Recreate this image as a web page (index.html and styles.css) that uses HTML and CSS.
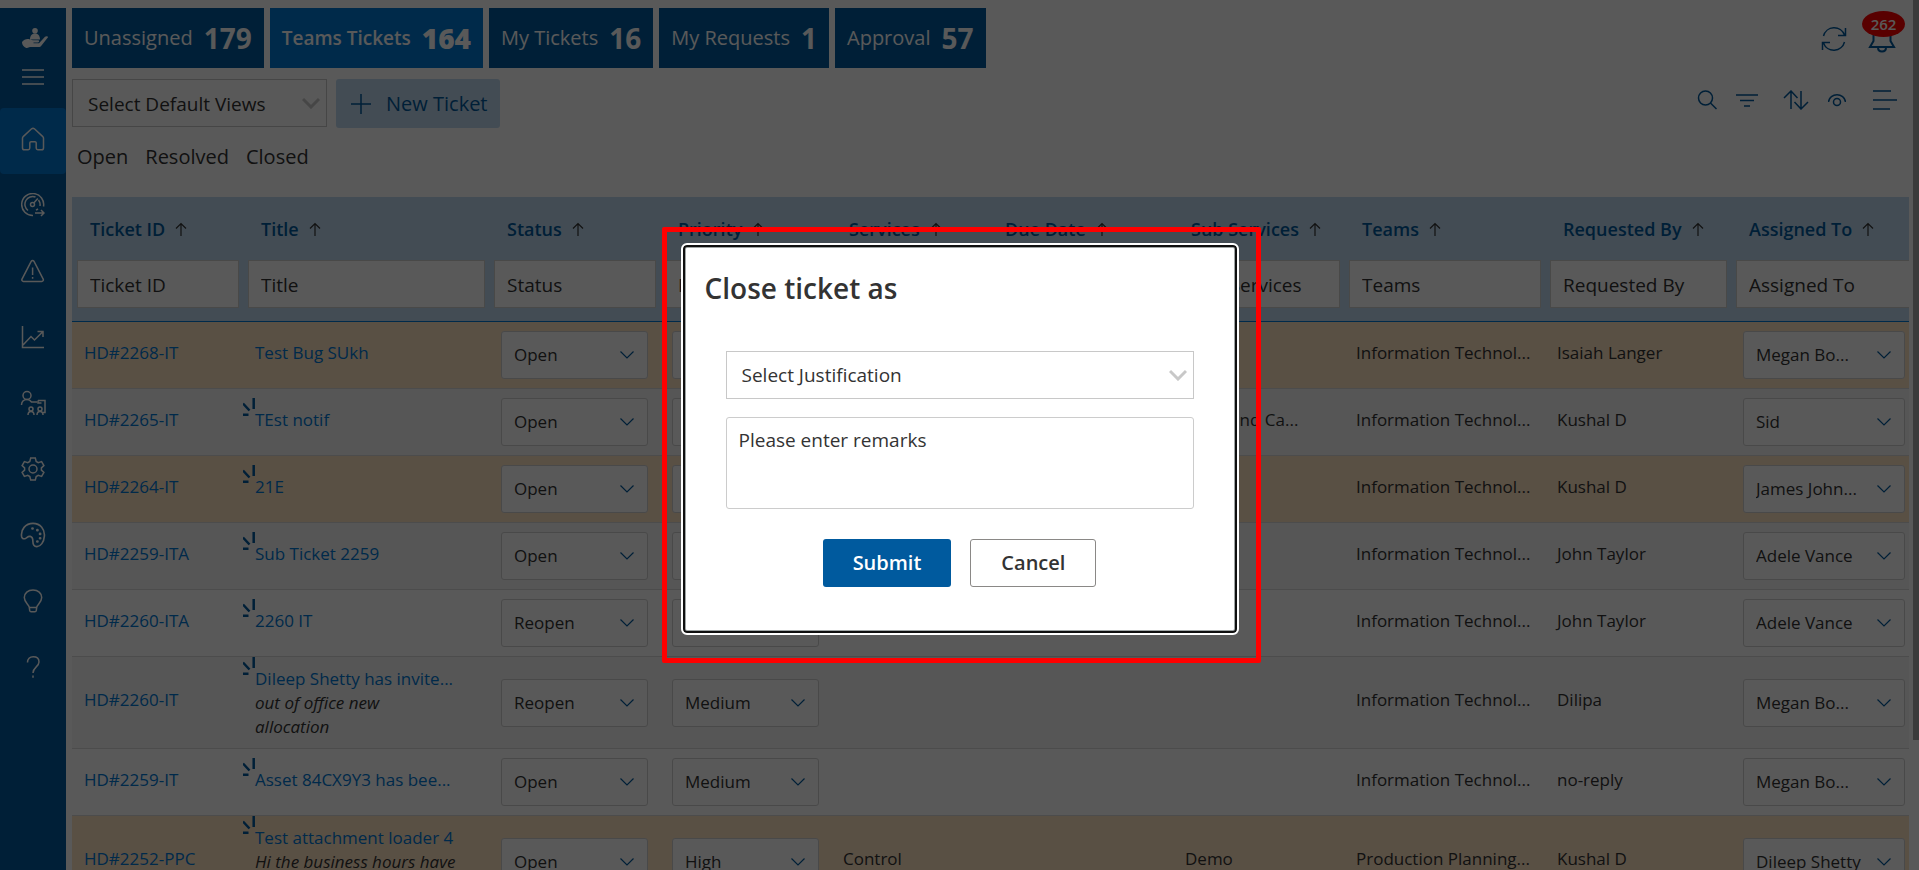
FILE: index.html
```html
<!DOCTYPE html>
<html lang="en">
<head>
<meta charset="utf-8">
<title>Teams Tickets</title>
<link rel="stylesheet" href="styles.css">
</head>
<body>
<svg class="sprite" aria-hidden="true">
  <symbol id="i-up" viewBox="0 0 12 15"><path d="M6 14V1.500M1 6.500 6 1.500l5 5"/></symbol>
  <symbol id="i-burst" viewBox="0 0 12 18"><path d="M10.700 0v11M0 5.500l6.500 7M0 16.800h5.500"/></symbol>
</svg>

<div class="app">
  <nav class="sidebar" aria-label="Main">
    <div class="sidebar-top">
      <svg class="logo" viewBox="0 0 26 20" aria-hidden="true"><circle cx="13" cy="2.800" r="2.800"/><path d="M8 11.500c0-4 2.200-6 5-6s5 2 5 6zM0 14c2-2.500 5-3.500 8-2.500l3 .7h5c1.500 0 1.500 2 0 2.200h-4.500v.8h5.500l6-6.500c1-1 3.500-.6 3 .6l-6.500 8.200c-.8 1-1.500 1.500-3 1.500H8L5 20c-2 0-5-2.500-5-6z"/></svg>
      <button class="icon-btn" type="button" aria-label="Toggle menu"><svg width="22" height="16" viewBox="0 0 22 16"><path d="M0 1h22M0 8h22M0 15h22"/></svg></button>
    </div>
    <a class="nav-item is-active" href="#" aria-label="Home"><svg width="24" height="24" viewBox="0 0 24 24"><path d="M12 1.300c.5 0 1 .2 1.400.5l8.400 7.800c.5.4.7 1 .7 1.600v9.700c0 1-.8 1.800-1.800 1.800h-3.900c-.9 0-1.600-.7-1.600-1.600V16c0-.8-.6-1.300-1.300-1.300h-3.800c-.7 0-1.300.5-1.300 1.300v5.100c0 .9-.7 1.600-1.600 1.600H3.300c-1 0-1.800-.8-1.800-1.800v-9.700c0-.6.2-1.200.7-1.600l8.400-7.800c.4-.3.900-.5 1.400-.5z"/></svg></a>
    <a class="nav-item" href="#" aria-label="Dashboard"><svg width="24" height="24" viewBox="0 0 24 24"><path d="M12 22.500A11 11 0 1 1 22.500 13.500M7 17.500A7.800 7.800 0 0 1 14.500 4M17.500 7A7.800 7.800 0 0 1 19 13M12.800 10l4-4.500M14 20h9M20 17l3 3-3 3M15 17.200l2-1.200"/><circle cx="11.500" cy="11.500" r="2"/></svg></a>
    <a class="nav-item" href="#" aria-label="Alerts"><svg width="24" height="24" viewBox="0 0 24 24"><path d="M10.300 2.200a1.600 1.600 0 0 1 2.600 0l9.300 18c.5 1-.2 2.200-1.400 2.200H2.400c-1.200 0-1.900-1.200-1.400-2.200zM11.600 8.500v7.500M11.600 18v1.800"/></svg></a>
    <a class="nav-item" href="#" aria-label="Reports"><svg width="24" height="24" viewBox="0 0 24 24"><path d="M1.500 1v21.500H23M2 20l8-8.500 3.500 3.500L22 6.500M16.500 6.500H22V12"/></svg></a>
    <a class="nav-item" href="#" aria-label="Teams"><svg width="26" height="26" viewBox="0 0 26 26"><circle cx="7" cy="5.500" r="4"/><path d="M1.500 15c0-3.200 2-5.500 5.500-5.500 2 0 3.500 1 4.500 2.500H17M18 10.500h7v12h-2.500M18 10.500v2.500h3.500M8 25c0-2 1-3.500 3-3.500s3 1.500 3 3.500M17 25c0-2 1-3.500 3-3.500s3 1.500 3 3.500"/><circle cx="11" cy="19" r="2"/><circle cx="20" cy="19" r="2"/></svg></a>
    <a class="nav-item" href="#" aria-label="Settings"><svg width="24" height="24" viewBox="0 0 24 24"><path d="M9.700 1h4.600l.9 3.400 2 1.200 3.400-1 2.300 4-2.500 2.300v2.200l2.500 2.300-2.300 4-3.400-1-2 1.200-.9 3.400H9.700l-.9-3.400-2-1.200-3.400 1-2.300-4 2.500-2.300v-2.200L1.100 8.600l2.300-4 3.400 1 2-1.200z"/><circle cx="12" cy="12" r="4"/></svg></a>
    <a class="nav-item" href="#" aria-label="Theme"><svg width="26" height="26" viewBox="0 0 24 24"><path d="M1.500 13.500C.5 7 5 1.300 12 1.300S23 7 22.500 13c-.4 5.500-3.500 9.800-7 9.700-2.800-.1-3.600-2.200-3.600-4.700 0-2.700-.6-4.300-2.400-4.700C7 12.800 6.300 15 4.500 15.400c-1.500.3-2.700-.5-3-1.900z"/><path class="dots" d="M11.500 6h.1M16 7.500h.1M18.500 11h.1M18.500 15h.1M16 18h.1"/></svg></a>
    <a class="nav-item" href="#" aria-label="Ideas"><svg width="24" height="24" viewBox="0 0 24 24"><path d="M8.300 18.500c-.3-3-5-5-5-10C3.300 4.200 7 1 12 1s8.700 3.200 8.700 7.500c0 5-4.700 7-5 10zM8.300 18.500l.4 3c.1.700.7 1.300 1.500 1.300h3.600c.8 0 1.400-.6 1.500-1.300l.4-3"/></svg></a>
    <a class="nav-item" href="#" aria-label="Help"><svg width="24" height="24" viewBox="0 0 24 24"><path d="M6.500 7.500C6.500 4 8.800 1.800 12.200 1.800s5.800 2 5.800 5.200c0 4.700-6 5.200-6 11M12 20.500v2.300"/></svg></a>
  </nav>

  <main class="main">
    <header class="topbar">
      <div class="tabs">
        <button class="tab" type="button">Unassigned <b>179</b></button>
        <button class="tab is-active" type="button">Teams Tickets <b>164</b></button>
        <button class="tab" type="button">My Tickets <b>16</b></button>
        <button class="tab" type="button">My Requests <b>1</b></button>
        <button class="tab" type="button">Approval <b>57</b></button>
      </div>
      <div class="top-actions">
        <button class="icon-btn" type="button" aria-label="Refresh"><svg width="26" height="26" viewBox="0 0 26 26"><path d="M2.500 10A11 11 0 0 1 23.500 9M24.500 2v7.500H17M23.500 16A11 11 0 0 1 2.500 17M1.500 24v-7.500H9"/></svg></button>
        <button class="icon-btn bell" type="button" aria-label="Notifications"><svg width="28" height="28" viewBox="0 0 28 28"><path d="M14 2c-5 0-8.500 3.500-8.500 8.500V16L2 22h24l-3.500-6v-5.500C22.500 5.500 19 2 14 2zM10 22.500c0 2.500 1.800 4 4 4s4-1.500 4-4"/></svg><span class="badge">262</span></button>
      </div>
    </header>

    <div class="toolbar">
      <select class="view-select" aria-label="Default view"><option>Select Default Views</option></select>
      <button class="new-ticket" type="button"><svg width="20" height="20" viewBox="0 0 20 20" aria-hidden="true"><path d="M10 0v20M0 10h20"/></svg>New Ticket</button>
      <div class="tools">
        <button class="icon-btn" type="button" aria-label="Search"><svg width="20" height="20" viewBox="0 0 20 20"><circle cx="8.500" cy="8" r="7"/><path d="M13.500 13l6 6"/></svg></button>
        <button class="icon-btn" type="button" aria-label="Filter"><svg width="22" height="14" viewBox="0 0 22 14"><path d="M0 2h22M4 7.500h14M8 13h6"/></svg></button>
        <button class="icon-btn sort" type="button" aria-label="Sort"><svg width="26" height="20" viewBox="0 0 26 20"><path d="M8 19V1.500M1 8l7-7 6.500 7M18 1v17.500M11.500 12l6.500 7 7-7"/></svg></button>
        <button class="icon-btn" type="button" aria-label="Show columns"><svg width="18" height="14" viewBox="0 0 18 14"><path d="M.5 9C1 4.500 5 1.800 9 1.800S17 4.500 17.500 9"/><circle cx="9" cy="9" r="3.500"/></svg></button>
        <button class="icon-btn list" type="button" aria-label="List options"><svg width="24" height="20" viewBox="0 0 24 20"><path d="M0 1h18M0 10h24M0 19h17"/></svg></button>
      </div>
    </div>

    <div class="quick-filters"><a href="#">Open</a><a href="#">Resolved</a><a href="#">Closed</a></div>

    <div class="table-wrap">
      <table class="tickets">
        <colgroup><col class="w-171"><col class="w-246"><col class="w-171"><col class="w-171"><col class="w-156"><col class="w-186"><col class="w-171"><col class="w-201"><col class="w-186"><col class="w-186"></colgroup>
        <thead>
          <tr>
            <th><span>Ticket ID <svg><use href="#i-up"/></svg></span><input aria-label="Filter Ticket ID" placeholder="Ticket ID"></th>
            <th><span>Title <svg><use href="#i-up"/></svg></span><input aria-label="Filter Title" placeholder="Title"></th>
            <th><span>Status <svg><use href="#i-up"/></svg></span><input aria-label="Filter Status" placeholder="Status"></th>
            <th><span>Priority <svg><use href="#i-up"/></svg></span><input aria-label="Filter Priority" placeholder="Priority"></th>
            <th><span>Services <svg><use href="#i-up"/></svg></span><input aria-label="Filter Services" placeholder="Services"></th>
            <th><span>Due Date <svg><use href="#i-up"/></svg></span><input aria-label="Filter Due Date" placeholder="Due Date"></th>
            <th><span>Sub Services <svg><use href="#i-up"/></svg></span><input aria-label="Filter Sub Services" placeholder="Sub Services"></th>
            <th><span>Teams <svg><use href="#i-up"/></svg></span><input aria-label="Filter Teams" placeholder="Teams"></th>
            <th><span>Requested By <svg><use href="#i-up"/></svg></span><input aria-label="Filter Requested By" placeholder="Requested By"></th>
            <th><span>Assigned To <svg><use href="#i-up"/></svg></span><input aria-label="Filter Assigned To" placeholder="Assigned To"></th>
          </tr>
        </thead>
        <tbody>
          <tr class="late">
            <td><a href="#">HD#2268-IT</a></td>
            <td><a href="#">Test Bug SUkh</a></td>
            <td class="pick"><select aria-label="Status"><option>Open</option></select></td>
            <td class="pick"><select aria-label="Priority"><option>Medium</option></select></td>
            <td></td><td></td><td></td>
            <td>Information Technol...</td><td>Isaiah Langer</td>
            <td class="pick"><select aria-label="Assigned to"><option>Megan Bo...</option></select></td>
          </tr>
          <tr>
            <td><a href="#">HD#2265-IT</a></td>
            <td><a class="fresh" href="#"><svg><use href="#i-burst"/></svg>TEst notif</a></td>
            <td class="pick"><select aria-label="Status"><option>Open</option></select></td>
            <td class="pick"><select aria-label="Priority"><option>Medium</option></select></td>
            <td></td><td></td><td>Sales and Ca...</td>
            <td>Information Technol...</td><td>Kushal D</td>
            <td class="pick"><select aria-label="Assigned to"><option>Sid</option></select></td>
          </tr>
          <tr class="late">
            <td><a href="#">HD#2264-IT</a></td>
            <td><a class="fresh" href="#"><svg><use href="#i-burst"/></svg>21E</a></td>
            <td class="pick"><select aria-label="Status"><option>Open</option></select></td>
            <td class="pick"><select aria-label="Priority"><option>Medium</option></select></td>
            <td></td><td></td><td></td>
            <td>Information Technol...</td><td>Kushal D</td>
            <td class="pick"><select aria-label="Assigned to"><option>James John...</option></select></td>
          </tr>
          <tr>
            <td><a href="#">HD#2259-ITA</a></td>
            <td><a class="fresh" href="#"><svg><use href="#i-burst"/></svg>Sub Ticket 2259</a></td>
            <td class="pick"><select aria-label="Status"><option>Open</option></select></td>
            <td class="pick"><select aria-label="Priority"><option>Medium</option></select></td>
            <td></td><td></td><td></td>
            <td>Information Technol...</td><td>John Taylor</td>
            <td class="pick"><select aria-label="Assigned to"><option>Adele Vance</option></select></td>
          </tr>
          <tr>
            <td><a href="#">HD#2260-ITA</a></td>
            <td><a class="fresh" href="#"><svg><use href="#i-burst"/></svg>2260 IT</a></td>
            <td class="pick"><select aria-label="Status"><option>Reopen</option></select></td>
            <td class="pick"><select aria-label="Priority"><option>Medium</option></select></td>
            <td></td><td></td><td></td>
            <td>Information Technol...</td><td>John Taylor</td>
            <td class="pick"><select aria-label="Assigned to"><option>Adele Vance</option></select></td>
          </tr>
          <tr>
            <td><a href="#">HD#2260-IT</a></td>
            <td class="long"><a class="fresh" href="#"><svg><use href="#i-burst"/></svg>Dileep Shetty has invite...</a><em>out of office new<br>allocation</em></td>
            <td class="pick"><select aria-label="Status"><option>Reopen</option></select></td>
            <td class="pick"><select aria-label="Priority"><option>Medium</option></select></td>
            <td></td><td></td><td></td>
            <td>Information Technol...</td><td>Dilipa</td>
            <td class="pick"><select aria-label="Assigned to"><option>Megan Bo...</option></select></td>
          </tr>
          <tr>
            <td><a href="#">HD#2259-IT</a></td>
            <td><a class="fresh" href="#"><svg><use href="#i-burst"/></svg>Asset 84CX9Y3 has bee...</a></td>
            <td class="pick"><select aria-label="Status"><option>Open</option></select></td>
            <td class="pick"><select aria-label="Priority"><option>Medium</option></select></td>
            <td></td><td></td><td></td>
            <td>Information Technol...</td><td>no-reply</td>
            <td class="pick"><select aria-label="Assigned to"><option>Megan Bo...</option></select></td>
          </tr>
          <tr class="late">
            <td><a href="#">HD#2252-PPC</a></td>
            <td class="long"><a class="fresh" href="#"><svg><use href="#i-burst"/></svg>Test attachment loader 4</a><em>Hi the business hours have</em></td>
            <td class="pick"><select aria-label="Status"><option>Open</option></select></td>
            <td class="pick"><select aria-label="Priority"><option>High</option></select></td>
            <td>Control</td><td></td><td>Demo</td>
            <td>Production Planning...</td><td>Kushal D</td>
            <td class="pick"><select aria-label="Assigned to"><option>Dileep Shetty</option></select></td>
          </tr>
        </tbody>
      </table>
    </div>
  </main>
  <div class="scrollbar"></div>
</div>

<div class="overlay">
  <div class="dialog-anchor">
    <section class="dialog" role="dialog" aria-labelledby="dialog-title">
      <h2 id="dialog-title">Close ticket as</h2>
      <form class="dialog-form">
        <select class="justification" aria-label="Justification"><option>Select Justification</option></select>
        <textarea aria-label="Remarks" placeholder="Please enter remarks"></textarea>
        <div class="dialog-actions">
          <button class="submit" type="button">Submit</button>
          <button class="cancel" type="button">Cancel</button>
        </div>
      </form>
    </section>
    <div class="highlight"></div>
  </div>
</div>
</body>
</html>
```
FILE: styles.css
```css
* { box-sizing: border-box; }

body {
  margin: 0;
  height: 100vh;
  overflow: hidden;
  background: #fff;
  color: #333;
  font-family: "Segoe UI", "Open Sans", "Noto Sans", sans-serif;
  font-size: 17px;
  line-height: 24px;
}

button, input, select, textarea { font: inherit; color: inherit; }
button { cursor: pointer; }
a { color: #0078d4; text-decoration: none; }
svg { display: block; fill: none; stroke: currentColor; stroke-width: 1.5; }
.sprite { position: absolute; width: 0; height: 0; }

select {
  appearance: none;
  border: 1px solid #d2d2d2;
  background: #fff no-repeat;
  text-overflow: ellipsis;
}

.icon-btn {
  position: relative;
  display: block;
  padding: 0;
  border: 0;
  background: none;
}

.app { display: flex; height: 100vh; overflow: hidden; }

/* Sidebar */
.sidebar {
  flex: none;
  width: 66px;
  margin-top: 8px;
  background: #005a9e;
  color: #fff;
}
.sidebar-top {
  display: flex;
  flex-direction: column;
  align-items: center;
  gap: 21px;
  height: 100px;
  padding-top: 20px;
}
.logo { width: 26px; height: 20px; fill: #fff; stroke: none; margin-left: 4px; }
.nav-item {
  display: grid;
  place-items: center;
  height: 66px;
  padding-bottom: 4px;
  border-radius: 4px;
  color: #fff;
}
.nav-item.is-active { background: #0078d4; }
.dots { stroke-width: 2.5; stroke-linecap: round; }

/* Main column */
.main { flex: 1; min-width: 0; padding: 8px 4px 0 6px; }
.scrollbar { flex: none; width: 6px; height: 85vh; background: #a8a8a8; }

.topbar { display: flex; justify-content: space-between; height: 60px; }
.tabs { display: flex; gap: 6px; }
.tab {
  display: flex;
  align-items: center;
  gap: 11px;
  padding: 0 12px;
  border: 0;
  background: #005a9e;
  color: #fff;
  font-size: 20px;
}
.tab b { font-size: 28px; }
.tab.is-active { background: #0078d4; font-size: 19px; font-weight: 600; }

.top-actions {
  display: flex;
  align-items: center;
  gap: 21px;
  padding: 2px 13px 0 0;
  color: #005a9e;
}
.bell svg { stroke-width: 2; }
.badge {
  position: absolute;
  left: -6px;
  top: -14px;
  width: 43px;
  border-radius: 50%;
  background: #f00;
  color: #fff;
  font-size: 15px;
  font-weight: 600;
  line-height: 26px;
}

.toolbar { display: flex; align-items: flex-start; gap: 9px; margin-top: 11px; color: #005a9e; }
.view-select, .justification {
  height: 48px;
  padding: 0 40px 0 15px;
  border-color: #c8c8c8;
  color: #333;
  background-image: url("data:image/svg+xml,%3Csvg xmlns='http://www.w3.org/2000/svg' width='18' height='12' fill='none' stroke='%23c8c8c8' stroke-width='3'%3E%3Cpath d='M1 2l8 8 8-8'/%3E%3C/svg%3E");
}
.view-select { width: 255px; padding-top: 2px; font-size: 19px; background-position: right 6px center; }
.new-ticket {
  display: flex;
  align-items: center;
  gap: 15px;
  height: 49px;
  padding: 0 12px 0 15px;
  border: 0;
  border-radius: 3px;
  background: #c0daf0;
  font-size: 20px;
}
.tools { display: flex; align-items: center; margin-left: auto; height: 41px; gap: 19px; padding-right: 12px; }
.sort { margin-left: 6px; }
.list { margin-left: 8px; }

.quick-filters { display: flex; gap: 17px; margin: 17px 0 28px; padding-left: 5px; font-size: 20px; }
.quick-filters a { color: #333; }

/* Ticket table */
.table-wrap { overflow: hidden; }
.tickets {
  width: calc(100% + 8px);
  table-layout: fixed;
  border-collapse: separate;
  border-spacing: 0;
}
.w-156 { width: 156px; }
.w-171 { width: 171px; }
.w-186 { width: 186px; }
.w-201 { width: 201px; }
.w-246 { width: 246px; }

.tickets th {
  padding: 20px 4px 13px 5px;
  background: #c0daf0;
  border-bottom: 1px solid #0078d4;
  color: #005a9e;
  font-size: 18px;
  font-weight: 600;
  text-align: left;
}
.tickets th span { display: flex; align-items: center; gap: 10px; padding-left: 13px; white-space: nowrap; }
.tickets th svg { width: 12px; height: 15px; color: #333; stroke-width: 1.2; }
.tickets input {
  display: block;
  width: 100%;
  height: 48px;
  margin-top: 19px;
  padding: 2px 12px 0;
  border: 1px solid #d2d0ce;
  border-radius: 0;
  background: #fff;
  color: #333;
  font-size: 19px;
  font-weight: 400;
}
::placeholder { color: #333; opacity: 1; }

.tickets td {
  height: 67px;
  padding: 8px 12px 13px;
  border-bottom: 1px solid #dadada;
  vertical-align: middle;
  white-space: nowrap;
}
.tickets tbody tr:nth-child(even) { background: #f6f6f6; }
.tickets tbody tr.late { background: #ffe4c4; }
.tickets td.long { height: 92px; padding: 10px 12px 9px; vertical-align: top; }
.tickets em { display: block; }
.tickets td.pick { padding: 0 12px; }
.pick select {
  display: block;
  width: 100%;
  height: 48px;
  padding: 0 34px 0 12px;
  border-radius: 3px;
  background-position: right 13px center;
  background-image: url("data:image/svg+xml,%3Csvg xmlns='http://www.w3.org/2000/svg' width='14' height='8' fill='none' stroke='%23005a9e' stroke-width='1.200'%3E%3Cpath d='M.5.5L7 7l6.500-6.500'/%3E%3C/svg%3E");
}
.fresh { position: relative; }
.fresh svg {
  position: absolute;
  left: -12px;
  top: -10px;
  width: 12px;
  height: 18px;
  color: #005a9e;
  stroke-width: 2.5;
}

/* Dialog */
.overlay {
  position: fixed;
  inset: 0;
  display: grid;
  place-items: center;
  padding-top: 8px;
  background: rgba(0, 0, 0, .65);
}
.dialog-anchor { position: relative; width: 558px; max-width: 90%; }
.dialog {
  padding: 23px 22px 46px;
  border: 2px solid #fff;
  border-radius: 6px;
  background: #fff;
  box-shadow: inset 0 0 0 2px #101010, inset 0 0 0 3px #a0a5a5;
}
.dialog h2 { margin: 0 0 43px; font-size: 28px; font-weight: 600; line-height: 40px; }
.dialog-form { display: flex; flex-direction: column; gap: 18px; padding: 0 21px; font-size: 19px; }
.justification { width: 100%; background-position: right 6px center; }
.dialog textarea {
  height: 92px;
  padding: 10px 12px;
  border: 1px solid #ccc;
  border-radius: 3px;
  resize: none;
}
.dialog-actions { display: flex; justify-content: center; gap: 19px; margin-top: 12px; }
.dialog-actions button { height: 48px; padding: 0 30px; border-radius: 3px; font-size: 20px; font-weight: 600; }
.submit { border: 0; background: #005a9e; color: #fff; }
.cancel { border: 1px solid #8a8886; background: #fff; color: #333; }
.highlight {
  position: absolute;
  inset: -16px -22px -28px -19px;
  border: 5px solid #f00;
  border-radius: 2px;
  pointer-events: none;
}
```
